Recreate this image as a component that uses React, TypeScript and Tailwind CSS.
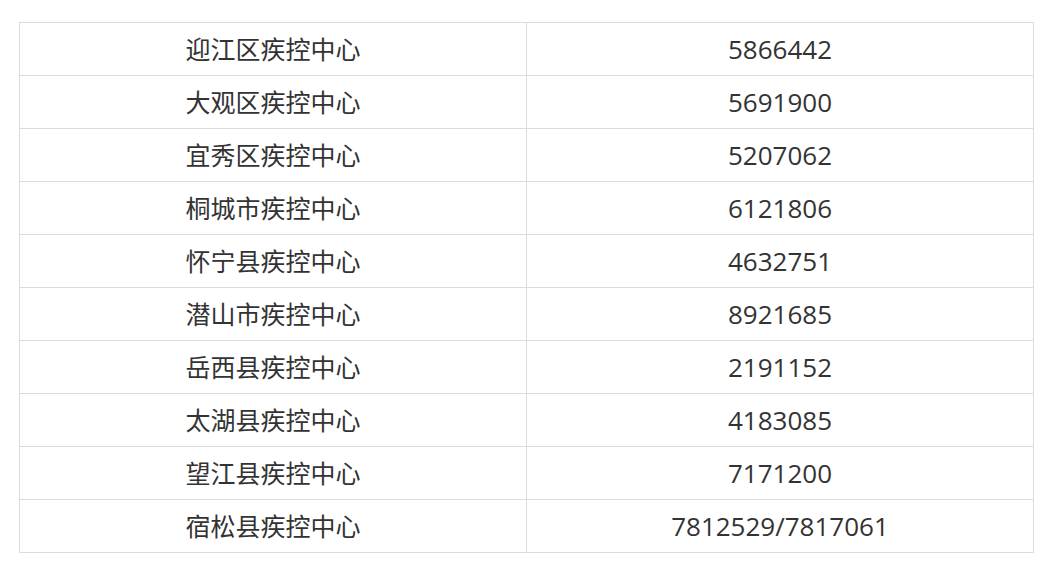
import React from "react";

const rows: [string, string][] = [
  ["迎江区疾控中心", "5866442"],
  ["大观区疾控中心", "5691900"],
  ["宜秀区疾控中心", "5207062"],
  ["桐城市疾控中心", "6121806"],
  ["怀宁县疾控中心", "4632751"],
  ["潜山市疾控中心", "8921685"],
  ["岳西县疾控中心", "2191152"],
  ["太湖县疾控中心", "4183085"],
  ["望江县疾控中心", "7171200"],
  ["宿松县疾控中心", "7812529/7817061"],
];

export default function App() {
  return (
    <div className="w-[1049px] h-[583px] bg-white pl-[19px] pt-[22px]">
      <table
        className="w-[1015px] border-collapse text-[#333]"
        style={{ fontFamily: '"Open Sans", "Noto Sans CJK SC", sans-serif' }}
      >
        <tbody>
          {rows.map(([a, b]) => (
            <tr key={a} className="h-[53px]">
              <td className="w-[507px] border border-[#dcdcdc] text-center p-0 leading-none text-[25px]">{a}</td>
              <td className="border border-[#dcdcdc] text-center p-0 leading-none text-[26px]">{b}</td>
            </tr>
          ))}
        </tbody>
      </table>
    </div>
  );
}
